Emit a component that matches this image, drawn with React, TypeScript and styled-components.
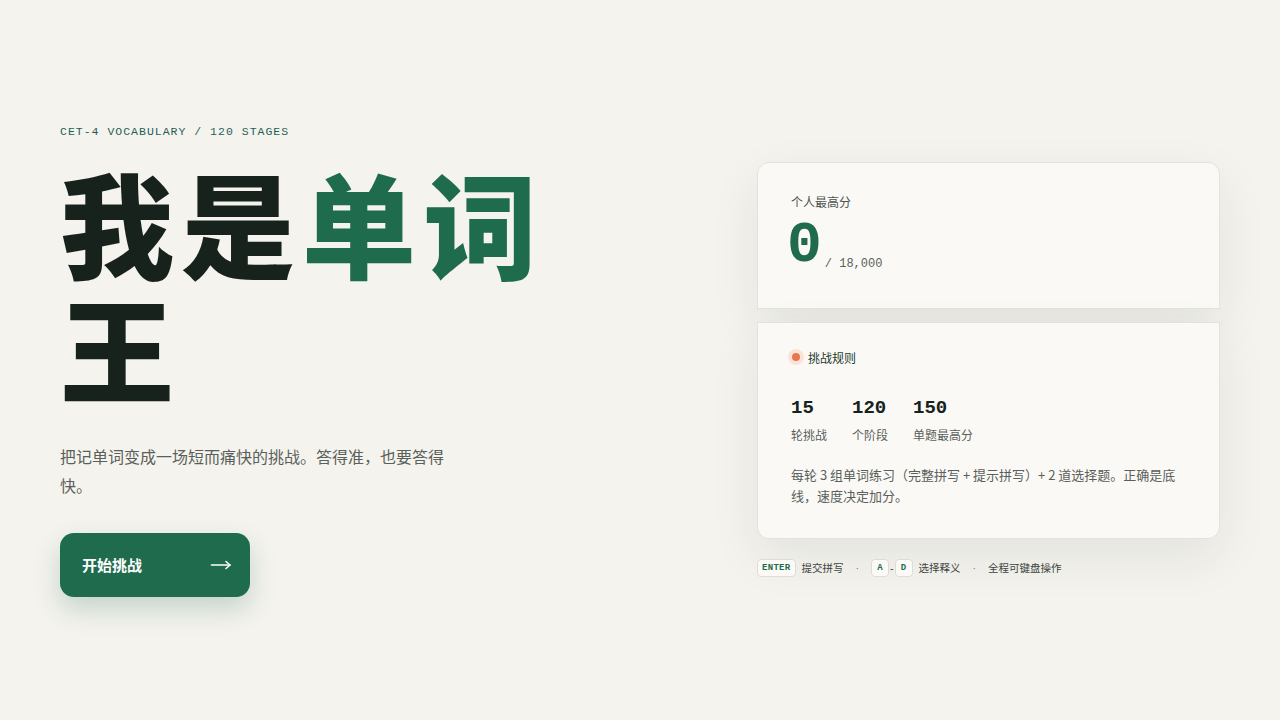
import React, { FC } from "react";
import styled, { createGlobalStyle } from "styled-components";

const GlobalStyle = createGlobalStyle`
  html, body {
    margin: 0;
    padding: 0;
    background: #f4f3ee;
  }
  body {
    font-family: "Noto Sans CJK SC", "Noto Sans", sans-serif;
    color: #18221d;
  }
  * {
    box-sizing: border-box;
  }
`;

const MONO = `"Liberation Mono", "DejaVu Sans Mono", "Noto Sans CJK SC", monospace`;

const Page = styled.main`
  min-height: 100vh;
  display: grid;
  grid-template-columns: 1fr 463px;
  align-items: center;
  padding: 0 60px;
`;

const Hero = styled.section`
  display: flex;
  flex-direction: column;
  align-items: flex-start;
  margin-top: 4px;
`;

const Eyebrow = styled.div`
  font-family: ${MONO};
  font-size: 11.5px;
  letter-spacing: 1px;
  line-height: 8px;
  color: #1f5f58;
`;

const Title = styled.h1`
  margin: 22px 0 0;
  max-width: 560px;
  font-size: 114px;
  line-height: 125px;
  font-weight: 900;
  letter-spacing: 7px;
  color: #18221d;
`;

const Accent = styled.span`
  color: #1f6b4e;
`;

const Lead = styled.p`
  margin: 34px 0 0;
  max-width: 392px;
  font-size: 16px;
  line-height: 29px;
  color: #5b5f5b;
`;

const StartButton = styled.button`
  margin-top: 33px;
  width: 190px;
  height: 64px;
  padding: 0 18px 0 22px;
  display: flex;
  align-items: center;
  justify-content: space-between;
  border: none;
  border-radius: 14px;
  background: #1f6b4e;
  color: #ffffff;
  font-family: inherit;
  font-size: 15px;
  font-weight: 700;
  box-shadow: 0 12px 26px rgba(31, 107, 78, 0.22);
  cursor: pointer;
`;

const Side = styled.aside`
  display: flex;
  flex-direction: column;
  margin-top: 18px;
`;

const Panel = styled.div<{ $edge: "top" | "bottom" }>`
  background: #faf9f6;
  border: 1px solid #e3e2dd;
  border-radius: ${(p) => (p.$edge === "top" ? "12px 12px 0 0" : "0 0 12px 12px")};
  box-shadow: 0 18px 50px rgba(40, 45, 35, 0.08);
  padding: ${(p) => (p.$edge === "top" ? "30px 33px 0" : "26px 33px 30px")};
  height: ${(p) => (p.$edge === "top" ? "147px" : "217px")};
  & + & {
    margin-top: 13px;
  }
`;

const Label = styled.div`
  font-size: 12px;
  color: #4d524e;
`;

const ScoreRow = styled.div`
  display: flex;
  align-items: flex-end;
  gap: 3px;
`;

const Score = styled.span`
  font-family: ${MONO};
  font-size: 58px;
  font-weight: 700;
  line-height: 72px;
  margin-left: -4px;
  color: #1f6b4e;
`;

const ScoreMax = styled.span`
  font-family: ${MONO};
  font-size: 12px;
  line-height: 12px;
  margin-bottom: 12px;
  color: #5b5f5b;
`;

const Tag = styled.div`
  display: flex;
  align-items: center;
  gap: 4px;
  margin-left: -3px;
  font-size: 12px;
  color: #1e3a2f;
`;

const Dot = styled.span`
  width: 16px;
  height: 16px;
  border-radius: 50%;
  background: #fae4da;
  display: grid;
  place-items: center;
  &::after {
    content: "";
    width: 8px;
    height: 8px;
    border-radius: 50%;
    background: #e8774f;
  }
`;

const Stats = styled.div`
  display: flex;
  gap: 25px;
  margin-top: 30px;
`;

const Stat = styled.div`
  display: flex;
  flex-direction: column;
`;

const StatValue = styled.span`
  font-family: ${MONO};
  font-size: 19px;
  font-weight: 700;
  line-height: 24px;
  color: #18221d;
`;

const StatLabel = styled.span`
  margin-top: 6px;
  font-size: 12px;
  color: #5b5f5b;
`;

const Rule = styled.p`
  margin: 21px 0 0;
  font-size: 13px;
  line-height: 21px;
  color: #5b5f5b;
`;

const Hints = styled.div`
  display: flex;
  align-items: center;
  margin-top: 20px;
  font-size: 10.5px;
  color: #3f4541;
`;

const Key = styled.kbd`
  font-family: ${MONO};
  font-size: 9px;
  font-weight: 700;
  letter-spacing: 0.3px;
  color: #1f6b4e;
  background: #fbfaf7;
  border: 1px solid #dddcd6;
  border-radius: 4px;
  padding: 0 4px;
  height: 18px;
  min-width: 18px;
  display: inline-grid;
  place-items: center;
`;

const HintText = styled.span`
  margin-left: 6px;
`;

const Sep = styled.span`
  font-family: "Liberation Sans", sans-serif;
  margin: 0 12px;
  color: #7a7e7a;
`;

const Dash = styled.span`
  font-family: "Liberation Sans", sans-serif;
  margin: 0 1px;
`;

const Arrow: FC = () => (
  <svg width="22" height="14" viewBox="0 0 22 14" fill="none" stroke="currentColor" strokeWidth="1.6" strokeLinecap="round" strokeLinejoin="round">
    <path d="M1.5 7h18.5" />
    <path d="M16 3.5 20 7l-4 3.5" />
  </svg>
);

const stats = [
  { value: "15", label: "轮挑战" },
  { value: "120", label: "个阶段" },
  { value: "150", label: "单题最高分" },
];

const App: FC = () => {
  return (
    <>
      <GlobalStyle />
      <Page>
        <Hero>
          <Eyebrow>CET-4 VOCABULARY / 120 STAGES</Eyebrow>
          <Title>
            我是<Accent>单词</Accent>王
          </Title>
          <Lead>把记单词变成一场短而痛快的挑战。答得准，也要答得快。</Lead>
          <StartButton>
            开始挑战
            <Arrow />
          </StartButton>
        </Hero>

        <Side>
          <Panel $edge="top">
            <Label>个人最高分</Label>
            <ScoreRow>
              <Score>0</Score>
              <ScoreMax>/ 18,000</ScoreMax>
            </ScoreRow>
          </Panel>
          <Panel $edge="bottom">
            <Tag>
              <Dot />
              挑战规则
            </Tag>
            <Stats>
              {stats.map((s) => (
                <Stat key={s.label}>
                  <StatValue>{s.value}</StatValue>
                  <StatLabel>{s.label}</StatLabel>
                </Stat>
              ))}
            </Stats>
            <Rule>每轮 3 组单词练习（完整拼写 + 提示拼写）+ 2 道选择题。正确是底线，速度决定加分。</Rule>
          </Panel>
          <Hints>
            <Key>ENTER</Key>
            <HintText>提交拼写</HintText>
            <Sep>·</Sep>
            <Key>A</Key>
            <Dash>-</Dash>
            <Key>D</Key>
            <HintText>选择释义</HintText>
            <Sep>·</Sep>
            <span>全程可键盘操作</span>
          </Hints>
        </Side>
      </Page>
    </>
  );
};

export default App;
